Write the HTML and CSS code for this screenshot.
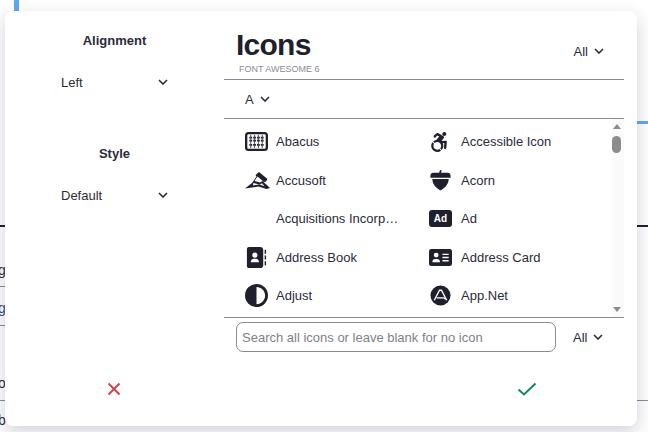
FILE: index.html
```html
<!DOCTYPE html>
<html lang="en">
<head>
<meta charset="utf-8">
<title>Icons</title>
<link rel="stylesheet" href="styles.css">
</head>
<body>
<div class="behind">
  <span class="bg-blue-top"></span>
  <span class="bg-blue-right"></span>
  <span class="bg-black bg-black-left"></span>
  <span class="bg-black bg-black-right"></span>
  <span class="bg-rule bg-rule-a"></span>
  <span class="bg-rule bg-rule-b"></span>
  <span class="bg-rule bg-rule-c"></span>
  <span class="bg-rule bg-rule-d"></span>
  <span class="bg-text bg-text-a">g</span>
  <span class="bg-text bg-text-b">g</span>
  <span class="bg-text bg-text-c">o</span>
  <span class="bg-text bg-text-d">b</span>
</div>
<div class="modal">
  <div class="main">
    <aside class="side">
      <section class="group">
        <h3 class="group-title">Alignment</h3>
        <div class="select"><span>Left</span><svg class="chev" viewBox="0 0 10 6"><path d="M1 1l4 4 4-4"/></svg></div>
      </section>
      <section class="group">
        <h3 class="group-title">Style</h3>
        <div class="select"><span>Default</span><svg class="chev" viewBox="0 0 10 6"><path d="M1 1l4 4 4-4"/></svg></div>
      </section>
    </aside>
    <div class="picker">
      <header class="head">
        <div class="brand">
          <h1 class="title">Icons</h1>
          <p class="subtitle">FONT AWESOME 6</p>
        </div>
        <div class="mini mini-head"><span>All</span><svg class="chev" viewBox="0 0 10 6"><path d="M1 1l4 4 4-4"/></svg></div>
      </header>
      <div class="letter"><div class="mini"><span>A</span><svg class="chev" viewBox="0 0 10 6"><path d="M1 1l4 4 4-4"/></svg></div></div>
      <div class="list-wrap">
        <ul class="list">
          <li class="item"><svg class="ico" viewBox="0 0 24 20"><rect x="1.200" y="1.200" width="21.600" height="17.600" rx="2.500" class="ln"/><path class="rods" d="M6 3v14M10 3v14M14 3v14M18 3v14"/><path class="beads" d="M4.500 6h3M8.500 6h3M12.500 6h3M16.500 6h3M4.500 9h3M8.500 9h3M12.500 9h3M16.500 9h3M4.500 13.500h3M8.500 13.500h3M12.500 13.500h3M16.500 13.500h3"/></svg><span class="label">Abacus</span></li>
          <li class="item"><svg class="ico" viewBox="-32.500 -50 589 589"><path class="fill" d="M423.900 255.800L411 413.100c-3.300 40.700-63.900 35.100-60.600-4.900l10-122.500-41.100 2.300c10.100 20.700 15.800 43.900 15.800 68.500 0 41.200-16.100 78.700-42.300 106.500l-39.300-39.300c57.900-63.700 13.100-167.200-74-167.200-25.900 0-49.500 9.900-67.200 26L73 243.200c22-20.700 50.100-35.100 81.400-40.200l75.300-85.700-42.600-24.800-51.600 46c-30 26.800-70.600-18.500-40.500-45.400l68-60.700c9.800-8.800 24.100-10.200 35.500-3.600 0 0 139.300 80.900 139.500 81.100 16.200 10.100 20.700 36 6.100 52.600L285.700 229l106.100-5.900c18.500-1.100 33.600 14.400 32.100 32.700zm-64.900-154c28.100 0 50.900-22.800 50.900-50.900C409.900 22.800 387.100 0 359 0c-28.100 0-50.900 22.800-50.900 50.900 0 28.100 22.800 50.900 50.900 50.900zM179.600 456.500c-80.600 0-127.400-90.600-82.700-156.100l-39.700-39.700C36.400 287 24 320.300 24 356.400c0 130.700 150.700 201.400 251.400 122.500l-39.700-39.700c-16 10.900-35.300 17.300-56.100 17.300z"/></svg><span class="label">Accessible Icon</span></li>
          <li class="item"><svg class="ico ico-wide" viewBox="0 0 25 17"><path class="fill" d="M0 16.500 7 11 11.500 4.500 10.500 3 14 0l8.500 7-1.500 2.500-2 .5L12.500 4.600 9.500 9 15 10.500 17.500 9l7.500 7-3.500 1-8-2.500L7 15.500z"/><path class="hole" d="M8.300 11l6.700 1.500 2-1.200 2.500 3-5.500-1.700-6 .8z"/></svg><span class="label">Accusoft</span></li>
          <li class="item"><svg class="ico" viewBox="0 0 24 24"><path class="fill" d="M11.500 1l1.800.6-.8 2.400h7.200c1.500 0 2.800 1.300 2.800 2.800V9H1.500V6.800C1.500 5.300 2.800 4 4.300 4h6.300zM3.500 10.500h17c0 5-2.800 8.500-8.500 12-5.700-3.500-8.500-7-8.500-12z"/></svg><span class="label">Acorn</span></li>
          <li class="item"><span class="ico"></span><span class="label">Acquisitions Incorporated</span></li>
          <li class="item"><span class="ico ad"><span>Ad</span></span><span class="label">Ad</span></li>
          <li class="item"><svg class="ico" viewBox="0 0 24 24"><path class="fill" d="M4 1h12c1.700 0 3 1.300 3 3v16c0 1.700-1.300 3-3 3H4c-1.100 0-2-.9-2-2V3c0-1.100.9-2 2-2z"/><circle class="hole" cx="10.300" cy="9.500" r="2.700"/><path class="hole" d="M6 17c0-2.500 1.500-3.700 3-3.700h2.600c1.500 0 3 1.200 3 3.700z"/><path class="fill" d="M20.500 4h1.500v4h-1.500zM20.500 10h1.500v4h-1.500zM20.500 16h1.500v4h-1.500z"/></svg><span class="label">Address Book</span></li>
          <li class="item"><svg class="ico" viewBox="0 0 24 20"><rect x="0" y="1" width="24" height="18" rx="2.500" class="fill"/><circle class="hole" cx="7.500" cy="7.500" r="2.500"/><path class="hole" d="M3.500 15c0-2.400 1.400-3.500 2.800-3.500h2.400c1.400 0 2.800 1.100 2.800 3.500z"/><path class="hole" d="M14 6h6.500v1.500H14zM14 9.300h6.500v1.500H14zM14 12.600h6.500v1.500H14z"/></svg><span class="label">Address Card</span></li>
          <li class="item"><svg class="ico" viewBox="0 0 512 512"><path class="fill" d="M448 256c0-106-86-192-192-192V448c106 0 192-86 192-192zM0 256a256 256 0 1 1 512 0A256 256 0 1 1 0 256z"/></svg><span class="label">Adjust</span></li>
          <li class="item"><svg class="ico" viewBox="0 0 24 24"><circle cx="12" cy="12" r="10.500" class="fill"/><path class="a-net" d="M5.500 17 11 6.500h2L18.500 17M8 14.500h7c1 0 1.500.5 2.200 1.500"/></svg><span class="label">App.Net</span></li>
        </ul>
        <div class="scrollbar">
          <span class="arrow-up"></span>
          <span class="thumb"></span>
          <span class="track"></span>
          <span class="arrow-down"></span>
        </div>
      </div>
      <div class="search-row">
        <input class="search" type="text" placeholder="Search all icons or leave blank for no icon">
        <div class="mini mini-search"><span>All</span><svg class="chev" viewBox="0 0 10 6"><path d="M1 1l4 4 4-4"/></svg></div>
      </div>
    </div>
  </div>
  <footer class="actions">
    <svg class="act act-x" viewBox="0 0 14 14"><path d="M1.500 1.500l11 11M12.500 1.500l-11 11"/></svg>
    <span></span>
    <svg class="act act-ok" viewBox="0 0 20 14"><path d="M1.500 7.500l5.500 5L18.500 1.500"/></svg>
  </footer>
</div>
</body>
</html>
```
FILE: styles.css
```css
* { box-sizing: border-box; }
html, body { margin: 0; padding: 0; height: 100%; }
body {
  position: relative;
  overflow: hidden;
  background: #fff;
  font-family: "Liberation Sans", Arial, sans-serif;
  font-size: 13px;
  color: #2b2b3a;
}
.behind { position: absolute; inset: 0; }
.behind span { position: absolute; display: block; }
.bg-blue-top { left: 14px; top: 0; width: 5px; height: 12px; background: #5ea8f5; }
.bg-blue-right { left: 637px; top: 121px; width: 11px; height: 3px; background: #5ea8f5; }
.bg-black { top: 225px; width: 11px; height: 2px; background: #1f1f2e; }
.bg-black-left { left: 0; width: 6px; }
.bg-black-right { left: 637px; }
.bg-rule { height: 1px; background: #8b8b94; }
.bg-rule-a { left: 0; top: 286px; width: 6px; }
.bg-rule-b { left: 0; top: 325px; width: 6px; }
.bg-rule-c { left: 0; top: 400px; width: 6px; }
.bg-rule-d { left: 637px; top: 400px; width: 11px; }
.bg-text { font-size: 14px; line-height: 16px; left: -2px; color: #2b2b3a; }
.bg-text-a { top: 262px; }
.bg-text-b { top: 300px; color: #2a4f80; }
.bg-text-c { top: 375px; }
.bg-text-d { top: 412px; }

.modal {
  position: absolute;
  left: 5px;
  top: 11px;
  width: 632px;
  height: 415px;
  background: #fff;
  border-radius: 8px;
  box-shadow: 0 6px 18px rgba(40, 45, 80, .22);
  display: flex;
  flex-direction: column;
}
.main { display: flex; height: 341px; }
.side { width: 219px; padding-top: 20px; }
.group { display: flex; flex-direction: column; align-items: center; margin-bottom: 47px; }
.group-title { margin: 0 0 16px; font-size: 13px; line-height: 20px; font-weight: 700; color: #2b2b3a; }
.select { width: 107px; height: 30px; display: flex; align-items: center; justify-content: space-between; }
.chev { width: 10px; height: 6px; fill: none; stroke: #2b2b3a; stroke-width: 1.6; flex: none; }

.picker { width: 400px; display: flex; flex-direction: column; }
.head { height: 69px; display: flex; justify-content: space-between; padding: 0 20px 0 12px; border-bottom: 1px solid #8b8b94; }
.title { margin: 16px 0 0; font-size: 30px; line-height: 36px; font-weight: 700; letter-spacing: -.75px; color: #1f1f2e; }
.subtitle { margin: 1px 0 0 3px; font-size: 9px; line-height: 11px; color: #8a8a93; }
.mini { display: flex; align-items: center; gap: 6px; }
.mini-head { height: 20px; margin-top: 30px; }
.letter { height: 39px; padding-left: 21px; display: flex; align-items: center; border-bottom: 1px solid #8b8b94; }

.list-wrap { display: flex; height: 199px; border-bottom: 1px solid #8b8b94; overflow: hidden; }
.list {
  list-style: none;
  margin: 0;
  padding: 3.5px 0 0 21px;
  flex: 1;
  display: grid;
  grid-template-columns: 184px 1fr;
  grid-auto-rows: 38.5px;
  align-content: start;
}
.item { display: flex; align-items: center; gap: 8px; min-width: 0; }
.item:nth-child(even) { gap: 9px; }
.ico { width: 23px; height: 23px; flex: none; display: block; }
.ico-wide { width: 25px; margin-right: -2px; }
.label { white-space: nowrap; overflow: hidden; text-overflow: ellipsis; width: 124px; }
.item:nth-child(even) .label { width: auto; }
.fill { fill: #1f1f2e; }
.hole { fill: #fff; }
.ln { fill: none; stroke: #1f1f2e; stroke-width: 2.400; }
.rods { fill: none; stroke: #1f1f2e; stroke-width: .8; }
.beads { fill: none; stroke: #1f1f2e; stroke-width: 1.800; stroke-dasharray: 1.400 .4; }
.a-net { fill: none; stroke: #fff; stroke-width: 1.400; }
.ad { display: flex; align-items: center; justify-content: center; height: 17px; background: #1f1f2e; border-radius: 3px; color: #fff; font-size: 10px; font-weight: 700; }

.scrollbar { width: 12px; flex: none; background: #fafafa; display: flex; flex-direction: column; align-items: center; padding: 5px 3px 5px 0; }
.arrow-up { width: 0; height: 0; border: 4.500px solid transparent; border-top: 0; border-bottom: 5px solid #8d8d8d; }
.thumb { width: 9px; height: 17px; border-radius: 5px; background: #8d8d8d; margin-top: 7px; }
.track { flex: 1; }
.arrow-down { width: 0; height: 0; border: 4.500px solid transparent; border-bottom: 0; border-top: 5px solid #8d8d8d; }

.search-row { display: flex; align-items: center; padding: 4px 20px 0 12px; gap: 17px; }
.search {
  width: 320px;
  height: 30px;
  border: 1px solid #8b8b94;
  border-radius: 7px;
  padding: 0 5px;
  font: 13px "Liberation Sans", Arial, sans-serif;
  color: #2b2b3a;
  background: #fff;
}
.search::placeholder { color: #7f7f88; opacity: 1; }

.actions { display: grid; grid-template-columns: 218px 207px 194px; justify-items: center; padding-top: 30px; }
.act { fill: none; }
.act-x { width: 14px; height: 14px; stroke: #d2434b; stroke-width: 2; }
.act-ok { width: 20px; height: 14px; stroke: #0c8a63; stroke-width: 2; }
```
